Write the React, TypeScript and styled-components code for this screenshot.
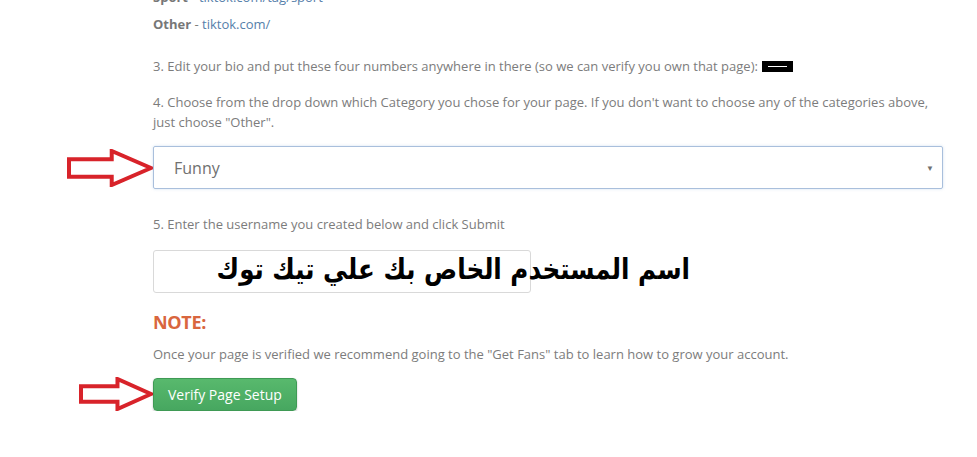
import React from "react";
import styled, { createGlobalStyle } from "styled-components";

const GlobalStyle = createGlobalStyle`
  html, body {
    margin: 0;
    padding: 0;
    background: #ffffff;
    overflow: hidden;
  }
  body {
    font-family: 'Open Sans', 'Liberation Sans', sans-serif;
  }
`;

const Page = styled.div`
  display: flex;
  flex-direction: column;
  margin-top: -13px;
`;

const Row = styled.div<{ $mt?: number }>`
  display: flex;
  flex-direction: row;
  align-items: center;
  margin-top: ${(p) => p.$mt ?? 0}px;
`;

const Gutter = styled.div`
  width: 153px;
  flex: 0 0 153px;
  display: flex;
  justify-content: flex-end;
  align-items: center;
`;

const Body = styled.div`
  width: 790px;
`;

const Text = styled.p`
  margin: 0;
  font-size: 13px;
  line-height: 20px;
  color: #7c7c7c;
`;

const Strong = styled.span`
  font-weight: 700;
  color: #777777;
`;

const Link = styled.a`
  color: #5680aa;
  text-decoration: none;
`;

const Redacted = styled.span`
  display: inline-block;
  vertical-align: middle;
  width: 31px;
  height: 11px;
  margin-left: 4px;
  margin-top: -3px;
  background: #000000;
  position: relative;
  &::after {
    content: "";
    position: absolute;
    left: 6px;
    right: 6px;
    top: 5px;
    height: 1px;
    background: #ffffff;
  }
`;

const Select = styled.div`
  box-sizing: border-box;
  width: 790px;
  height: 43px;
  border: 1px solid #a9bfdc;
  border-radius: 2px;
  box-shadow: 0 0 3px rgba(102, 153, 204, 0.3);
  display: flex;
  align-items: center;
  justify-content: space-between;
  padding: 0 8px 0 20px;
  font-size: 16px;
  color: #707070;
`;

const Caret = styled.span`
  font-size: 8px;
  color: #707070;
`;

const InputWrap = styled.div`
  position: relative;
  width: 378px;
`;

const Input = styled.div`
  box-sizing: border-box;
  width: 378px;
  height: 43px;
  border: 1px solid #d9d9d9;
  border-radius: 3px;
`;

const Overlay = styled.span`
  position: absolute;
  right: -159px;
  top: 1px;
  white-space: nowrap;
  direction: rtl;
  font-family: 'DejaVu Sans', sans-serif;
  font-weight: 700;
  font-size: 24.6px;
  line-height: 38px;
  color: #000000;
  transform: scaleY(1.15);
  transform-origin: right center;
`;

const Note = styled.h3`
  margin: 0;
  font-size: 18px;
  line-height: 24px;
  font-weight: 700;
  color: #d9663e;
  letter-spacing: -0.3px;
`;

const Button = styled.button`
  box-sizing: border-box;
  height: 33px;
  padding: 0 14px;
  border: 1px solid #3f9a55;
  border-radius: 4px;
  background: linear-gradient(#58b96d, #47a760);
  box-shadow: 0 1px 2px rgba(0, 0, 0, 0.25);
  color: #ffffff;
  font-family: 'Open Sans', 'Liberation Sans', sans-serif;
  font-size: 14px;
`;

const Arrow = ({ w, h }: { w: number; h: number }) => {
  const shaftTop = h * 0.27;
  const shaftBot = h * 0.73;
  const headX = w * 0.52;
  return (
    <svg width={w} height={h} viewBox={`0 0 ${w} ${h}`}>
      <polygon
        points={`2,${shaftTop} ${headX},${shaftTop} ${headX},2 ${w - 2},${h / 2} ${headX},${h - 2} ${headX},${shaftBot} 2,${shaftBot}`}
        fill="#ffffff"
        stroke="#d8232a"
        strokeWidth={4}
        strokeLinejoin="miter"
      />
    </svg>
  );
};

export default function App() {
  return (
    <>
      <GlobalStyle />
      <Page>
        <Row>
          <Gutter />
          <Body>
            <Text>
              <Strong>Sport</Strong> - <Link>tiktok.com/tag/sport</Link>
            </Text>
          </Body>
        </Row>
        <Row $mt={7}>
          <Gutter />
          <Body>
            <Text>
              <Strong>Other</Strong> - <Link>tiktok.com/</Link>
            </Text>
          </Body>
        </Row>
        <Row $mt={22}>
          <Gutter />
          <Body>
            <Text>
              3. Edit your bio and put these four numbers anywhere in there (so we can verify you own that page):
              <Redacted />
            </Text>
          </Body>
        </Row>
        <Row $mt={16}>
          <Gutter />
          <Body>
            <Text>
              4. Choose from the drop down which Category you chose for your page. If you don't want to choose any of
              the categories above, just choose "Other".
            </Text>
          </Body>
        </Row>
        <Row $mt={14}>
          <Gutter>
            <Arrow w={86} h={38} />
          </Gutter>
          <Body>
            <Select>
              Funny
              <Caret>▼</Caret>
            </Select>
          </Body>
        </Row>
        <Row $mt={25}>
          <Gutter />
          <Body>
            <Text>5. Enter the username you created below and click Submit</Text>
          </Body>
        </Row>
        <Row $mt={16}>
          <Gutter />
          <Body>
            <InputWrap>
              <Input />
              <Overlay>اسم المستخدم الخاص بك علي تيك توك</Overlay>
            </InputWrap>
          </Body>
        </Row>
        <Row $mt={17}>
          <Gutter />
          <Body>
            <Note>NOTE:</Note>
          </Body>
        </Row>
        <Row $mt={10}>
          <Gutter />
          <Body>
            <Text>Once your page is verified we recommend going to the "Get Fans" tab to learn how to grow your account.</Text>
          </Body>
        </Row>
        <Row $mt={13}>
          <Gutter>
            <Arrow w={74} h={34} />
          </Gutter>
          <Body>
            <Button>Verify Page Setup</Button>
          </Body>
        </Row>
      </Page>
    </>
  );
}
